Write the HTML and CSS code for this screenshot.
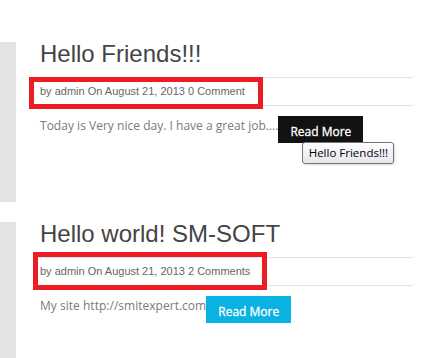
FILE: index.html
```html
<!DOCTYPE html>
<html>
<head>
<meta charset="utf-8">
<link rel="stylesheet" href="styles.css">
</head>
<body>
<div class="page">
  <article class="post">
    <div class="bar"></div>
    <div class="content">
      <h2 class="title">Hello Friends!!!</h2>
      <div class="meta">by admin On August 21, 2013 0 Comment</div>
      <div class="excerpt">
        <span class="text">Today is Very nice day. I have a great job….</span>
        <a class="btn dark">Read More<span class="tooltip">Hello Friends!!!</span></a>
      </div>
    </div>
    <div class="mark mark-one"></div>
  </article>
  <article class="post">
    <div class="bar"></div>
    <div class="content">
      <h2 class="title">Hello world! SM-SOFT</h2>
      <div class="meta">by admin On August 21, 2013 2 Comments</div>
      <div class="excerpt">
        <span class="text">My site http://smitexpert.com</span>
        <a class="btn blue">Read More</a>
      </div>
    </div>
    <div class="mark mark-two"></div>
  </article>
</div>
</body>
</html>
```

FILE: styles.css
```css
html, body {
  margin: 0;
  padding: 0;
  background: #fff;
}
.page {
  padding-top: 42px;
}
.post {
  position: relative;
  display: flex;
  height: 160px;
  margin-bottom: 20px;
}
.bar {
  width: 16px;
  background: #e4e4e4;
  flex: none;
}
.content {
  margin-left: 17px;
  width: 380px;
}
.title {
  margin: 0;
  padding-left: 7px;
  font-family: "Liberation Sans", Arial, sans-serif;
  font-weight: normal;
  font-size: 24px;
  line-height: 24px;
  color: #444;
}
.meta {
  margin-top: 11px;
  padding-left: 7px;
  border-top: 1px solid #e4e4e4;
  border-bottom: 1px solid #e4e4e4;
  height: 27px;
  line-height: 27px;
  font-family: "Liberation Sans", Arial, sans-serif;
  font-size: 11px;
  color: #666;
}
.excerpt {
  display: flex;
  align-items: flex-start;
  margin-top: 10px;
  padding-left: 7px;
}
.text {
  font-family: "Open Sans", sans-serif;
  font-size: 12px;
  letter-spacing: 0.02px;
  line-height: 20px;
  color: #7a7a7a;
}
.btn {
  position: relative;
  display: block;
  width: 85px;
  box-sizing: border-box;
  padding: 8px 0 4px;
  text-align: center;
  font-family: "Open Sans", sans-serif;
  font-size: 12px;
  font-weight: normal;
  -webkit-text-stroke: 0.3px #fff;
  line-height: 15px;
  color: #fff;
}
.dark {
  background: #121212;
}
.blue {
  background: #0ab1e3;
}
.tooltip {
  position: absolute;
  left: 24px;
  top: 26px;
  width: 92px;
  height: 22px;
  box-sizing: border-box;
  border: 1px solid #767676;
  border-radius: 3px;
  background: linear-gradient(#ffffff, #e6e7ef);
  box-shadow: 1px 1px 2px rgba(0, 0, 0, 0.15);
  font-family: "Open Sans", sans-serif;
  font-size: 11.5px;
  font-weight: normal;
  -webkit-text-stroke: 0;
  line-height: 20px;
  color: #000;
  text-align: center;
}
.mark {
  position: absolute;
  box-sizing: border-box;
  border: 5px solid #ed1c24;
}
.mark-one {
  left: 29px;
  top: 35px;
  width: 234px;
  height: 32px;
}
.mark-two {
  left: 33px;
  top: 30px;
  width: 234px;
  height: 38px;
}
```
